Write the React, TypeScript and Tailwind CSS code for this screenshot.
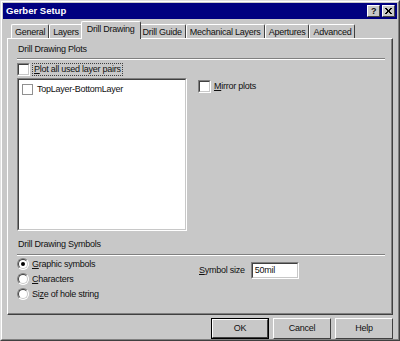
import React from 'react';

const font = { fontFamily: '"Liberation Sans", Arial, sans-serif' };

const raised =
  'border-t border-l border-t-white border-l-white border-b border-r border-b-[#404040] border-r-[#404040]';
const sunken =
  'border-t border-l border-t-[#808080] border-l-[#808080] border-b border-r border-b-white border-r-white';
const sunkenInner =
  'border-t border-l border-t-[#404040] border-l-[#404040] border-b border-r border-b-[#c8c8c8] border-r-[#c8c8c8]';

function Check({ checked = false }: { checked?: boolean }) {
  return (
    <span className={'inline-block w-[13px] h-[13px] bg-white shrink-0 ' + sunken}>
      <span className={'block w-full h-full ' + sunkenInner}>
        {checked && <span className="block w-[5px] h-[5px] bg-black" />}
      </span>
    </span>
  );
}

function Radio({ checked = false }: { checked?: boolean }) {
  return (
    <span className="relative inline-block w-[12px] h-[12px] shrink-0">
      <span className="absolute inset-0 rounded-full border border-t-[#808080] border-l-[#808080] border-b-white border-r-white bg-white" />
      <span className="absolute inset-[1px] rounded-full border border-t-[#404040] border-l-[#404040] border-b-[#c8c8c8] border-r-[#c8c8c8]" />
      {checked && <span className="absolute left-[4px] top-[4px] w-[4px] h-[4px] rounded-full bg-black" />}
    </span>
  );
}

function Tab({ label, active = false }: { label: string; active?: boolean }) {
  return (
    <div
      className={
        'whitespace-nowrap border-t border-l border-t-white border-l-white border-r border-r-[#404040] rounded-t-[2px] flex items-center ' +
        (active
          ? 'h-[18px] px-[5px] -mx-[2px] relative z-10 bg-[#c8c8c8] pb-[2px]'
          : 'h-[15px] px-[3px]')
      }
    >
      {label}
    </div>
  );
}

function Button({ label, def = false }: { label: string; def?: boolean }) {
  return (
    <div className={'w-[58px] h-[21px] ' + (def ? 'border border-black' : '')}>
      <div className={'w-full h-full flex items-center justify-center ' + raised}>{label}</div>
    </div>
  );
}

export default function App() {
  return (
    <div
      style={font}
      className="w-[400px] h-[341px] bg-[#c8c8c8] text-[9px] tracking-[-0.25px] text-[#101010] leading-none border-t border-l border-t-[#e0e0e0] border-l-[#e0e0e0] border-b border-r border-b-[#404040] border-r-[#404040] overflow-hidden"
    >
      <div className="h-full border-t border-l border-t-white border-l-white border-b border-r border-b-[#808080] border-r-[#808080] flex flex-col">
        {/* Title bar */}
        <div className="mx-[1px] mt-[1px] h-[16px] bg-[#000080] flex items-center justify-between pl-[3px] pr-[2px]">
          <span className="text-white font-bold text-[9.5px] tracking-normal">Gerber Setup</span>
          <div className="flex gap-[2px]">
            <div className={'w-[13px] h-[12px] bg-[#c8c8c8] flex items-center justify-center font-bold text-[9px] ' + raised}>
              ?
            </div>
            <div className={'w-[13px] h-[12px] bg-[#c8c8c8] flex items-center justify-center ' + raised}>
              <svg width="7" height="6" viewBox="0 0 7 6">
                <path d="M0 0L6 6M1 0L7 6M6 0L0 6M7 0L1 6" stroke="black" strokeWidth="1" />
              </svg>
            </div>
          </div>
        </div>

        {/* Tabs */}
        <div className="flex items-end mt-[2px] pl-[9px] h-[18px]">
          <Tab label="General" />
          <Tab label="Layers" />
          <Tab label="Drill Drawing" active />
          <Tab label="Drill Guide" />
          <Tab label="Mechanical Layers" />
          <Tab label="Apertures" />
          <Tab label="Advanced" />
        </div>

        {/* Panel */}
        <div className={'mx-[5px] h-[277px] -mt-[1px] ' + raised}>
          <div className="h-full border-b border-r border-b-[#808080] border-r-[#808080] pl-[9px] pr-[6px] pt-[5px] flex flex-col">
            <div className="h-[11px] flex items-center pl-[1px]">Drill Drawing Plots</div>
            <div className="mt-[3px] border-t border-t-[#808080] border-b border-b-white" />
            <div className="flex items-center gap-[3px] mt-[3px] h-[13px]">
              <Check />
              <span className="outline outline-1 outline-dotted outline-[#404040] px-[1px] py-[1px]">
                <span className="underline">P</span>lot all used layer pairs
              </span>
            </div>
            <div className="flex mt-[2px]">
              <div className={'w-[170px] h-[153px] bg-white ' + sunken}>
                <div className={'w-full h-full px-[3px] pt-[4px] ' + sunkenInner}>
                  <div className="flex items-center gap-[4px] h-[11px]">
                    <span className="inline-block w-[11px] h-[11px] border border-[#909090] bg-white" />
                    TopLayer-BottomLayer
                  </div>
                </div>
              </div>
              <div className="flex items-center gap-[3px] ml-[11px] mt-[2px] h-[13px]">
                <Check />
                <span>
                  <span className="underline">M</span>irror plots
                </span>
              </div>
            </div>
            <div className="mt-[8px] h-[11px] flex items-center pl-[1px]">Drill Drawing Symbols</div>
            <div className="mt-[4px] border-t border-t-[#808080] border-b border-b-white" />
            <div className="flex mt-[2px]">
              <div className="flex flex-col gap-[3px] w-[182px]">
                <div className="flex items-center gap-[3px] h-[12px]">
                  <Radio checked />
                  <span>
                    <span className="underline">G</span>raphic symbols
                  </span>
                </div>
                <div className="flex items-center gap-[3px] h-[12px]">
                  <Radio />
                  <span>
                    <span className="underline">C</span>haracters
                  </span>
                </div>
                <div className="flex items-center gap-[3px] h-[12px]">
                  <Radio />
                  <span>
                    Si<span className="underline">z</span>e of hole string
                  </span>
                </div>
              </div>
              <div className="flex items-center gap-[6px] h-[17px] mt-[4px]">
                <span>
                  <span className="underline">S</span>ymbol size
                </span>
                <div className={'w-[48px] h-[17px] bg-white ' + sunken}>
                  <div className={'w-full h-full pl-[2px] flex items-center ' + sunkenInner}>50mil</div>
                </div>
              </div>
            </div>
          </div>
        </div>

        {/* Buttons */}
        <div className="flex justify-end gap-[4px] mt-[3px] pr-[5px]">
          <Button label="OK" def />
          <Button label="Cancel" />
          <Button label="Help" />
        </div>
      </div>
    </div>
  );
}
